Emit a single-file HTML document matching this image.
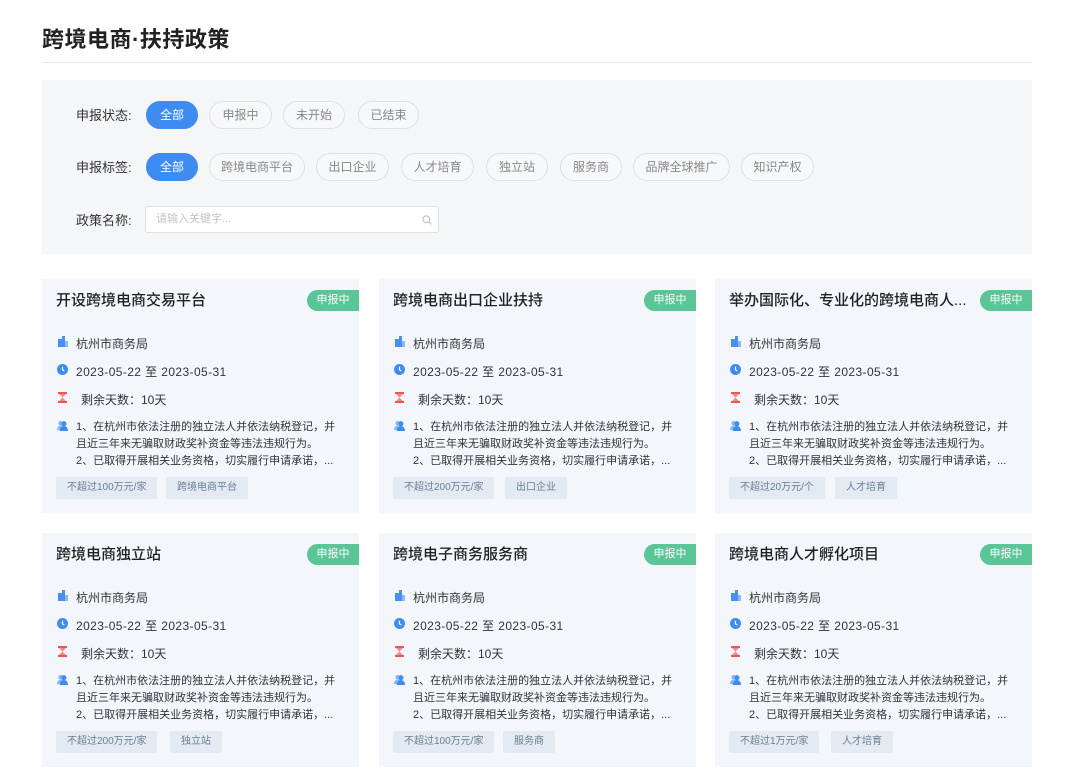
<!DOCTYPE html>
<html><head><meta charset="utf-8"><style>
*{margin:0;padding:0;box-sizing:border-box}
body{width:1080px;height:769px;background:#fff;font-family:"Liberation Sans","Noto Sans CJK SC",sans-serif;position:relative;overflow:hidden;color:#333}
.h1{position:absolute;left:42px;top:22px;font-size:22px;font-weight:bold;color:#222;letter-spacing:0.5px}
.line{position:absolute;left:42px;top:62px;width:990px;height:1px;background:#e8e8e8}
.panel{position:absolute;left:42px;top:80px;width:990px;height:174px;background:#f5f6f8}
.lbl{position:absolute;left:76px;font-size:13px;color:#333}
.pill{position:absolute;height:28px;border:1px solid #dcdfe6;border-radius:14px;font-size:12px;color:#888;line-height:26px;text-align:center;background:#f7f8fa}
.pill.on{background:#3f8cf0;border-color:#3f8cf0;color:#fff}
.inp{position:absolute;left:145px;top:206px;width:294px;height:27px;background:#fff;border:1px solid #dde0e6;border-radius:3px;font-size:11px;color:#c0c4cc;line-height:25px;padding-left:10px}
.card{position:absolute;width:317px;height:234px;background:#f3f7fc}
.t{position:absolute;left:14px;top:10px;font-size:15px;color:#222;font-weight:500;white-space:nowrap}
.st{position:absolute;right:0;top:11px;width:52px;height:21px;background:#5cc597;color:#fff;font-size:11px;line-height:21px;text-align:center;border-radius:11px 0 0 11px}
.r{position:absolute;left:34px;font-size:12px;color:#333;white-space:nowrap}
.dt{letter-spacing:0.4px}
.ic{position:absolute;left:15px;width:11px;height:11px}
.d{position:absolute;left:34px;top:140px;font-size:11px;line-height:17px;color:#333;white-space:nowrap}
.tg{position:absolute;top:198px;height:22px;background:#e3eaf2;color:#6a7f96;font-size:10px;line-height:22px;padding:0 11px;border-radius:2px;white-space:nowrap}
</style></head><body>
<div class="h1">跨境电商·扶持政策</div>
<div class="line"></div>
<div class="panel"></div>
<div class="lbl" style="top:105px">申报状态:</div>
<div class="lbl" style="top:157px">申报标签:</div>
<div class="lbl" style="top:210px">政策名称:</div>
<div class="pill on" style="left:146px;top:101px;width:52px">全部</div>
<div class="pill" style="left:209px;top:101px;width:63px">申报中</div>
<div class="pill" style="left:283px;top:101px;width:62px">未开始</div>
<div class="pill" style="left:358px;top:101px;width:61px">已结束</div>
<div class="pill on" style="left:146px;top:153px;width:52px">全部</div>
<div class="pill" style="left:209px;top:153px;width:96px">跨境电商平台</div>
<div class="pill" style="left:316px;top:153px;width:73px">出口企业</div>
<div class="pill" style="left:401px;top:153px;width:73px">人才培育</div>
<div class="pill" style="left:486px;top:153px;width:62px">独立站</div>
<div class="pill" style="left:560px;top:153px;width:62px">服务商</div>
<div class="pill" style="left:633px;top:153px;width:97px">品牌全球推广</div>
<div class="pill" style="left:741px;top:153px;width:73px">知识产权</div>
<div class="inp">请输入关键字...<svg style="position:absolute;right:6px;top:8px" width="10" height="10" viewBox="0 0 10 10"><circle cx="4.3" cy="4.3" r="3.4" fill="none" stroke="#bbb" stroke-width="1"/><line x1="6.8" y1="6.8" x2="9.3" y2="9.3" stroke="#bbb"/></svg></div>

<div class="card" style="left:42px;top:279px">
<div class="t">开设跨境电商交易平台</div><div class="st">申报中</div>
<svg class="ic" style="top:57px" viewBox="0 0 11 11"><rect x="1" y="3" width="4" height="8" fill="#4a8ef0"/><rect x="5" y="0" width="3" height="11" fill="#4a8ef0"/><rect x="8" y="5" width="3" height="6" fill="#8ab8f5"/></svg>
<div class="r" style="top:56px">杭州市商务局</div>
<svg class="ic" style="top:85px" viewBox="0 0 12 12"><circle cx="6" cy="6" r="6" fill="#3f8cf0"/><path d="M6 3v3.3l2 1.4" stroke="#fff" stroke-width="1.3" fill="none"/></svg>
<div class="r dt" style="top:84px">2023-05-22 至 2023-05-31</div>
<svg class="ic" style="top:113px" viewBox="0 0 11 11"><rect x="1" y="0" width="9" height="2" fill="#e55"/><rect x="1" y="9" width="9" height="2" fill="#e55"/><path d="M2 2h7L5.5 5.5z M2 9h7L5.5 5.5z" fill="#f08a8a"/></svg>
<div class="r" style="top:112px;left:39px">剩余天数：10天</div>
<svg class="ic" style="top:141px" viewBox="0 0 12 12"><circle cx="4" cy="3.5" r="2.5" fill="#8ab8f5"/><circle cx="7.5" cy="4" r="2.8" fill="#3f8cf0"/><path d="M0 11c0-3 2-5 4-5s4 2 4 5z" fill="#8ab8f5"/><path d="M3 12c0-3.5 2-5.5 4.5-5.5S12 8.5 12 12z" fill="#3f8cf0"/></svg>
<div class="d">1、在杭州市依法注册的独立法人并依法纳税登记，并<br>且近三年来无骗取财政奖补资金等违法违规行为。<br>2、已取得开展相关业务资格，切实履行申请承诺，...</div>
<div class="tg" style="left:14px">不超过100万元/家</div><div class="tg" style="left:124px">跨境电商平台</div>
</div>

<div class="card" style="left:379px;top:279px">
<div class="t">跨境电商出口企业扶持</div><div class="st">申报中</div>
<svg class="ic" style="top:57px" viewBox="0 0 11 11"><rect x="1" y="3" width="4" height="8" fill="#4a8ef0"/><rect x="5" y="0" width="3" height="11" fill="#4a8ef0"/><rect x="8" y="5" width="3" height="6" fill="#8ab8f5"/></svg>
<div class="r" style="top:56px">杭州市商务局</div>
<svg class="ic" style="top:85px" viewBox="0 0 12 12"><circle cx="6" cy="6" r="6" fill="#3f8cf0"/><path d="M6 3v3.3l2 1.4" stroke="#fff" stroke-width="1.3" fill="none"/></svg>
<div class="r dt" style="top:84px">2023-05-22 至 2023-05-31</div>
<svg class="ic" style="top:113px" viewBox="0 0 11 11"><rect x="1" y="0" width="9" height="2" fill="#e55"/><rect x="1" y="9" width="9" height="2" fill="#e55"/><path d="M2 2h7L5.5 5.5z M2 9h7L5.5 5.5z" fill="#f08a8a"/></svg>
<div class="r" style="top:112px;left:39px">剩余天数：10天</div>
<svg class="ic" style="top:141px" viewBox="0 0 12 12"><circle cx="4" cy="3.5" r="2.5" fill="#8ab8f5"/><circle cx="7.5" cy="4" r="2.8" fill="#3f8cf0"/><path d="M0 11c0-3 2-5 4-5s4 2 4 5z" fill="#8ab8f5"/><path d="M3 12c0-3.5 2-5.5 4.5-5.5S12 8.5 12 12z" fill="#3f8cf0"/></svg>
<div class="d">1、在杭州市依法注册的独立法人并依法纳税登记，并<br>且近三年来无骗取财政奖补资金等违法违规行为。<br>2、已取得开展相关业务资格，切实履行申请承诺，...</div>
<div class="tg" style="left:14px">不超过200万元/家</div><div class="tg" style="left:126px">出口企业</div>
</div>

<div class="card" style="left:715px;top:279px">
<div class="t">举办国际化、专业化的跨境电商人...</div><div class="st">申报中</div>
<svg class="ic" style="top:57px" viewBox="0 0 11 11"><rect x="1" y="3" width="4" height="8" fill="#4a8ef0"/><rect x="5" y="0" width="3" height="11" fill="#4a8ef0"/><rect x="8" y="5" width="3" height="6" fill="#8ab8f5"/></svg>
<div class="r" style="top:56px">杭州市商务局</div>
<svg class="ic" style="top:85px" viewBox="0 0 12 12"><circle cx="6" cy="6" r="6" fill="#3f8cf0"/><path d="M6 3v3.3l2 1.4" stroke="#fff" stroke-width="1.3" fill="none"/></svg>
<div class="r dt" style="top:84px">2023-05-22 至 2023-05-31</div>
<svg class="ic" style="top:113px" viewBox="0 0 11 11"><rect x="1" y="0" width="9" height="2" fill="#e55"/><rect x="1" y="9" width="9" height="2" fill="#e55"/><path d="M2 2h7L5.5 5.5z M2 9h7L5.5 5.5z" fill="#f08a8a"/></svg>
<div class="r" style="top:112px;left:39px">剩余天数：10天</div>
<svg class="ic" style="top:141px" viewBox="0 0 12 12"><circle cx="4" cy="3.5" r="2.5" fill="#8ab8f5"/><circle cx="7.5" cy="4" r="2.8" fill="#3f8cf0"/><path d="M0 11c0-3 2-5 4-5s4 2 4 5z" fill="#8ab8f5"/><path d="M3 12c0-3.5 2-5.5 4.5-5.5S12 8.5 12 12z" fill="#3f8cf0"/></svg>
<div class="d">1、在杭州市依法注册的独立法人并依法纳税登记，并<br>且近三年来无骗取财政奖补资金等违法违规行为。<br>2、已取得开展相关业务资格，切实履行申请承诺，...</div>
<div class="tg" style="left:14px">不超过20万元/个</div><div class="tg" style="left:120px">人才培育</div>
</div>

<div class="card" style="left:42px;top:533px">
<div class="t">跨境电商独立站</div><div class="st">申报中</div>
<svg class="ic" style="top:57px" viewBox="0 0 11 11"><rect x="1" y="3" width="4" height="8" fill="#4a8ef0"/><rect x="5" y="0" width="3" height="11" fill="#4a8ef0"/><rect x="8" y="5" width="3" height="6" fill="#8ab8f5"/></svg>
<div class="r" style="top:56px">杭州市商务局</div>
<svg class="ic" style="top:85px" viewBox="0 0 12 12"><circle cx="6" cy="6" r="6" fill="#3f8cf0"/><path d="M6 3v3.3l2 1.4" stroke="#fff" stroke-width="1.3" fill="none"/></svg>
<div class="r dt" style="top:84px">2023-05-22 至 2023-05-31</div>
<svg class="ic" style="top:113px" viewBox="0 0 11 11"><rect x="1" y="0" width="9" height="2" fill="#e55"/><rect x="1" y="9" width="9" height="2" fill="#e55"/><path d="M2 2h7L5.5 5.5z M2 9h7L5.5 5.5z" fill="#f08a8a"/></svg>
<div class="r" style="top:112px;left:39px">剩余天数：10天</div>
<svg class="ic" style="top:141px" viewBox="0 0 12 12"><circle cx="4" cy="3.5" r="2.5" fill="#8ab8f5"/><circle cx="7.5" cy="4" r="2.8" fill="#3f8cf0"/><path d="M0 11c0-3 2-5 4-5s4 2 4 5z" fill="#8ab8f5"/><path d="M3 12c0-3.5 2-5.5 4.5-5.5S12 8.5 12 12z" fill="#3f8cf0"/></svg>
<div class="d">1、在杭州市依法注册的独立法人并依法纳税登记，并<br>且近三年来无骗取财政奖补资金等违法违规行为。<br>2、已取得开展相关业务资格，切实履行申请承诺，...</div>
<div class="tg" style="left:14px">不超过200万元/家</div><div class="tg" style="left:128px">独立站</div>
</div>

<div class="card" style="left:379px;top:533px">
<div class="t">跨境电子商务服务商</div><div class="st">申报中</div>
<svg class="ic" style="top:57px" viewBox="0 0 11 11"><rect x="1" y="3" width="4" height="8" fill="#4a8ef0"/><rect x="5" y="0" width="3" height="11" fill="#4a8ef0"/><rect x="8" y="5" width="3" height="6" fill="#8ab8f5"/></svg>
<div class="r" style="top:56px">杭州市商务局</div>
<svg class="ic" style="top:85px" viewBox="0 0 12 12"><circle cx="6" cy="6" r="6" fill="#3f8cf0"/><path d="M6 3v3.3l2 1.4" stroke="#fff" stroke-width="1.3" fill="none"/></svg>
<div class="r dt" style="top:84px">2023-05-22 至 2023-05-31</div>
<svg class="ic" style="top:113px" viewBox="0 0 11 11"><rect x="1" y="0" width="9" height="2" fill="#e55"/><rect x="1" y="9" width="9" height="2" fill="#e55"/><path d="M2 2h7L5.5 5.5z M2 9h7L5.5 5.5z" fill="#f08a8a"/></svg>
<div class="r" style="top:112px;left:39px">剩余天数：10天</div>
<svg class="ic" style="top:141px" viewBox="0 0 12 12"><circle cx="4" cy="3.5" r="2.5" fill="#8ab8f5"/><circle cx="7.5" cy="4" r="2.8" fill="#3f8cf0"/><path d="M0 11c0-3 2-5 4-5s4 2 4 5z" fill="#8ab8f5"/><path d="M3 12c0-3.5 2-5.5 4.5-5.5S12 8.5 12 12z" fill="#3f8cf0"/></svg>
<div class="d">1、在杭州市依法注册的独立法人并依法纳税登记，并<br>且近三年来无骗取财政奖补资金等违法违规行为。<br>2、已取得开展相关业务资格，切实履行申请承诺，...</div>
<div class="tg" style="left:14px">不超过100万元/家</div><div class="tg" style="left:124px">服务商</div>
</div>

<div class="card" style="left:715px;top:533px">
<div class="t">跨境电商人才孵化项目</div><div class="st">申报中</div>
<svg class="ic" style="top:57px" viewBox="0 0 11 11"><rect x="1" y="3" width="4" height="8" fill="#4a8ef0"/><rect x="5" y="0" width="3" height="11" fill="#4a8ef0"/><rect x="8" y="5" width="3" height="6" fill="#8ab8f5"/></svg>
<div class="r" style="top:56px">杭州市商务局</div>
<svg class="ic" style="top:85px" viewBox="0 0 12 12"><circle cx="6" cy="6" r="6" fill="#3f8cf0"/><path d="M6 3v3.3l2 1.4" stroke="#fff" stroke-width="1.3" fill="none"/></svg>
<div class="r dt" style="top:84px">2023-05-22 至 2023-05-31</div>
<svg class="ic" style="top:113px" viewBox="0 0 11 11"><rect x="1" y="0" width="9" height="2" fill="#e55"/><rect x="1" y="9" width="9" height="2" fill="#e55"/><path d="M2 2h7L5.5 5.5z M2 9h7L5.5 5.5z" fill="#f08a8a"/></svg>
<div class="r" style="top:112px;left:39px">剩余天数：10天</div>
<svg class="ic" style="top:141px" viewBox="0 0 12 12"><circle cx="4" cy="3.5" r="2.5" fill="#8ab8f5"/><circle cx="7.5" cy="4" r="2.8" fill="#3f8cf0"/><path d="M0 11c0-3 2-5 4-5s4 2 4 5z" fill="#8ab8f5"/><path d="M3 12c0-3.5 2-5.5 4.5-5.5S12 8.5 12 12z" fill="#3f8cf0"/></svg>
<div class="d">1、在杭州市依法注册的独立法人并依法纳税登记，并<br>且近三年来无骗取财政奖补资金等违法违规行为。<br>2、已取得开展相关业务资格，切实履行申请承诺，...</div>
<div class="tg" style="left:14px">不超过1万元/家</div><div class="tg" style="left:116px">人才培育</div>
</div>
</body></html>
